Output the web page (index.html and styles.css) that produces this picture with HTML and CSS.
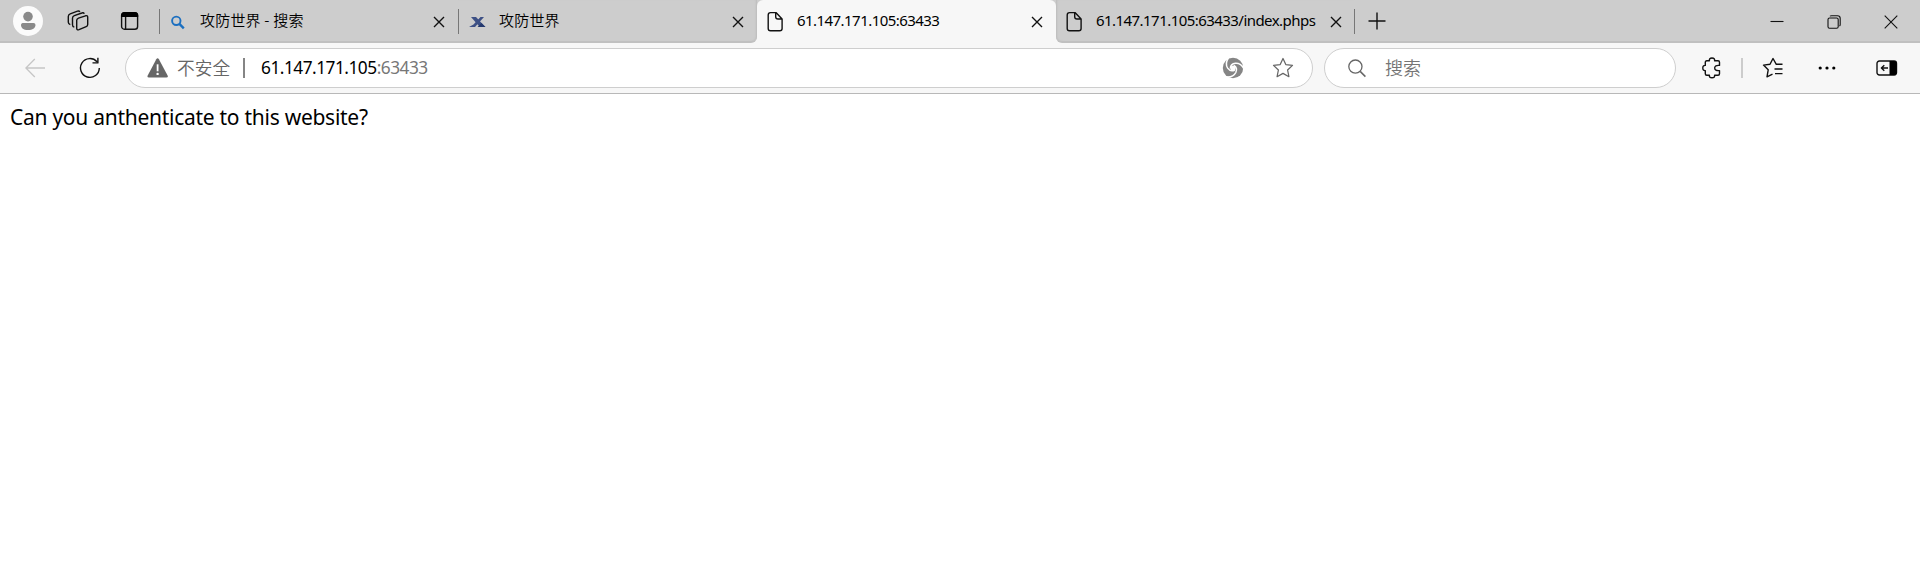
FILE: index.html
```
<!DOCTYPE html>
<html lang="zh-CN">
<head>
<meta charset="utf-8">
<title>61.147.171.105:63433</title>
<link rel="stylesheet" href="styles.css">
</head>
<body>
<header class="tabstrip">
  <div class="tools">
    <svg class="avatar" width="30" height="30" viewBox="0 0 30 30"><circle cx="15" cy="15" r="15" fill="#fbfbfb"/><circle cx="15" cy="10.600" r="4.800" fill="#8a8a8a"/><path d="M9.500 17h11a2 2 0 0 1 2 2c0 3-3 5-7.500 5S8 22 8 19a2 2 0 0 1 1.500-2z" fill="#8a8a8a"/></svg>
    <svg class="spaces" width="22" height="22" viewBox="0 0 22 22"><g class="line"><path d="M11.500 8.100 18.500 5.800Q20.700 5.200 20.700 7.300V14.400Q20.700 16 19.200 16.600L12 19.600Q9.700 20.400 9.700 18.300V10.300Q9.700 8.800 11.500 8.100"/><path d="M17.300 3.800Q16.600 2.300 14.800 3L7.300 5.700Q5.500 6.400 5.500 8.200V14.700Q5.500 16.700 7.300 17.200"/><path d="M13 1.700Q12 .7 10.500 1.200L3.200 3.800Q1.300 4.500 1.300 6.400V12.300Q1.300 14 3.300 14.700"/></g></svg>
    <svg class="layout" width="20" height="20" viewBox="0 0 20 20"><rect class="line" x="1.600" y="1.600" width="16" height="16.600" rx="2.800"/><path d="M1 6V4.500Q1 1 4.500 1h10.200q3.500 0 3.500 3.500V6z"/><path class="line" d="M5.600 6v12"/></svg>
  </div>
  <nav class="tabs">
    <div class="tab divided">
      <svg class="favicon" width="20" height="22" viewBox="0 0 20 22"><circle cx="8.300" cy="9.800" r="4.200" fill="none" stroke="#1b6fc0" stroke-width="1.900"/><path d="m11.400 12.900 4.400 4.400" stroke="#1b6fc0" stroke-width="2.400"/></svg>
      <span class="title cn">攻防世界 - 搜索</span>
      <svg class="close" width="12" height="12" viewBox="0 0 12 12"><path class="line" d="m1 1 10 10M11 1 1 11"/></svg>
    </div>
    <div class="tab divided">
      <svg class="favicon" width="20" height="22" viewBox="0 0 20 22"><path d="M4 6h5l9.300 10h-5.500z" fill="#3d5085"/><path d="M17 6h-3.500L6.500 13.500 2 16h6z" fill="#3d5085"/><path d="M14.500 12 18.500 16H10.500z" fill="#24396f"/></svg>
      <span class="title cn">攻防世界</span>
      <svg class="close" width="12" height="12" viewBox="0 0 12 12"><path class="line" d="m1 1 10 10M11 1 1 11"/></svg>
    </div>
    <div class="tab active">
      <svg class="favicon" width="20" height="22" viewBox="0 0 20 22"><path class="line" d="M10 1.600H4.500Q2.200 1.600 2.200 4v13.500q0 2.300 2.300 2.300h9.300q2.300 0 2.300-2.300V8zM9.700 1.600v4.100Q9.700 8 12 8h4"/></svg>
      <span class="title">61.147.171.105:63433</span>
      <svg class="close" width="12" height="12" viewBox="0 0 12 12"><path class="line" d="m1 1 10 10M11 1 1 11"/></svg>
    </div>
    <div class="tab after">
      <svg class="favicon" width="20" height="22" viewBox="0 0 20 22"><path class="line" d="M10 1.600H4.500Q2.200 1.600 2.200 4v13.500q0 2.300 2.300 2.300h9.300q2.300 0 2.300-2.300V8zM9.700 1.600v4.100Q9.700 8 12 8h4"/></svg>
      <span class="title">61.147.171.105:63433/index.phps</span>
      <svg class="close" width="12" height="12" viewBox="0 0 12 12"><path class="line" d="m1 1 10 10M11 1 1 11"/></svg>
    </div>
    <div class="newtab divided"><svg width="18" height="18" viewBox="0 0 18 18"><path class="line" d="M9 .5v17M.5 9h17"/></svg></div>
  </nav>
  <div class="window">
    <svg width="14" height="14" viewBox="0 0 14 14"><path d="M.5 6.500h13" class="thin"/></svg>
    <svg width="14" height="14" viewBox="0 0 14 14"><rect class="thin" x="1" y="3" width="10.200" height="10.300" rx="1.600"/><path class="thin" d="M3 1.300Q3.400.7 4.500.7h6q2.700 0 2.700 2.700v6.200q0 1-.7 1.500"/></svg>
    <svg width="14" height="14" viewBox="0 0 14 14"><path class="thin" d="m.7.700 12.600 12.600M13.300.7.700 13.300"/></svg>
  </div>
</header>

<div class="toolbar">
  <svg class="back" width="20" height="20" viewBox="0 0 20 20"><path d="M20 10H1M9.800 1 .9 10l8.900 9" fill="none" stroke="#c6c6c6" stroke-width="1.300"/></svg>
  <svg class="reload" width="22" height="22" viewBox="0 0 22 22"><path class="line" d="M20.300 11A9.400 9.400 0 1 1 18 4.800M18.900.8v5.100h-5.400"/></svg>
  <div class="pill address">
    <svg width="22" height="20" viewBox="0 0 22 20"><path d="M9.300 1.300q1.300-2 2.600 0l8.700 16.200q.9 2-1.300 2H2q-2.200 0-1.300-2z" fill="#666"/><path d="M10.600 6.300v7" stroke="#fff" stroke-width="1.800"/><circle cx="10.600" cy="15.900" r="1.200" fill="#fff"/></svg>
    <span class="insecure">不安全</span>
    <i class="bar"></i>
    <span class="url">61.147.171.105<span class="port">:63433</span></span>
    <svg class="swirl" width="22" height="22" viewBox="0 0 22 22"><circle cx="11" cy="11" r="10.200" fill="#858585"/><circle cx="11" cy="11" r="2.600" fill="#fff"/><g fill="none" stroke="#fff" stroke-width="1.500"><path id="gap" d="M22 12Q19 6 13.500 6.300 8.500 6.800 8.300 11.500"/><use href="#gap" transform="rotate(120 11 11)"/><use href="#gap" transform="rotate(240 11 11)"/></g></svg>
    <svg class="star" width="22" height="22" viewBox="0 0 22 22"><path fill="none" stroke="#666" stroke-width="1.250" stroke-linejoin="round" d="m11 1.500 2.800 6.100 6.700.8-4.900 4.600 1.300 6.700-5.900-3.300-5.900 3.300 1.300-6.700-4.900-4.600 6.700-.8z"/></svg>
  </div>
  <div class="pill search">
    <svg width="18" height="19" viewBox="0 0 18 19"><circle cx="7.400" cy="7.600" r="6.600" fill="none" stroke="#666" stroke-width="1.300"/><path d="m12.200 12.400 5.200 5.200" stroke="#666" stroke-width="1.500"/></svg>
    <span class="hint">搜索</span>
  </div>
  <div class="actions">
    <svg class="puzzle" width="20" height="22" viewBox="0 0 20 22"><path class="line" d="M4.800 3.800h2.600Q6.900 1 10 1t2.600 2.800H16q1.500 0 1.500 1.500v3.100q-4.800-.5-4.800 2.600t4.800 2.600v3.200q0 1.500-1.500 1.500h-3.400Q12.900 20.800 10 20.800T7.400 18.300H4.800q-1.500 0-1.500-1.500v-3.200Q.8 13.800.8 11t2.500-2.600V5.300Q3.300 3.800 4.800 3.800"/></svg>
    <i class="bar light"></i>
    <svg class="favorites" width="22" height="22" viewBox="0 0 22 22"><path class="line" d="M20.500 7.300h-6.200L11 1.500 8 7.300l-6.500.8 4.700 4.700L5 19.800l5.500-2.700M12.500 12h8M13 16.600h7.500"/></svg>
    <svg class="more" width="18" height="6" viewBox="0 0 18 6"><circle cx="2.200" cy="3" r="1.600"/><circle cx="9" cy="3" r="1.600"/><circle cx="15.800" cy="3" r="1.600"/></svg>
    <svg class="sidebar" width="22" height="16" viewBox="0 0 22 16"><rect class="line" x="1" y="1" width="19.500" height="14" rx="2.400"/><path d="M13.500 1H18q2.700 0 2.700 2.700v8.600Q20.700 15 18 15h-4.500z"/><path class="line" d="M12 8H5.500M8.300 5.200 5.400 8l2.900 2.800"/></svg>
  </div>
</div>
<main class="page">Can you anthenticate to this website?</main>
</body>
</html>
```
FILE: styles.css
```
* { box-sizing: border-box; }
body { margin: 0; background: #fff; color: #000; font-family: "Noto Sans", "Noto Sans CJK SC", sans-serif; }
svg { display: block; flex: none; }
.line { fill: none; stroke: #111; stroke-width: 1.4; stroke-linejoin: round; }
.thin { fill: none; stroke: #111; stroke-width: 1.1; }

.tabstrip { display: flex; height: 43px; background: #f7f7f7; }
.tools { display: flex; width: 159px; padding: 6px 0 0 13px; background: #cdcdcd; border-bottom: 2px solid #c0c0c0; }
.spaces { margin: 4px 0 0 24px; }
.layout { margin: 5px 0 0 31px; }
.tabs { display: flex; flex: 1; }
.tab { display: flex; width: 299px; padding: 10px 13px 0 9px; background: #cdcdcd; border-bottom: 2px solid #c0c0c0; }
.tab.divided, .newtab { background: linear-gradient(#777, #777) 0 9px / 1px 25px no-repeat #cdcdcd; }
.tab:nth-child(2) { border-bottom-right-radius: 6px; box-shadow: inset -2px 0 2px -1px #bbb; }
.tab.active { background: #f7f7f7; border-color: #f7f7f7; border-radius: 6px 6px 0 0; box-shadow: 0 -6px 0 6px #cdcdcd; clip-path: inset(0); }
.tab.after { border-bottom-left-radius: 6px; box-shadow: inset 2px 0 2px -1px #bbb; }
.favicon { margin-top: 1px; }
.title { flex: 1; margin-left: 11px; font-size: 15px; line-height: 20px; letter-spacing: -.55px; white-space: nowrap; }
.title.cn { margin-left: 12px; font-family: "Noto Sans CJK SC", sans-serif; font-weight: 350; letter-spacing: .2px; }
.close { margin: 6px 0 0; }
.newtab { flex: 1; margin-left: -1px; padding: 12px 0 0 14px; border-bottom: 2px solid #c0c0c0; }
.window { display: flex; gap: 43px; padding: 15px 22px 0 0; background: #cdcdcd; border-bottom: 2px solid #c0c0c0; }

.toolbar { display: flex; align-items: center; height: 51px; padding: 0 20px 0 25px; background: #f7f7f7; border-bottom: 1px solid #b8b8b8; }
.reload { margin: 0 24px 0 34px; }
.pill { display: flex; align-items: center; flex: none; height: 40px; background: #fff; border: 1px solid #cecece; border-radius: 20px; }
.address { width: 1188px; padding: 0 18px 0 21px; }
.insecure { margin: -2px 0 0 8px; width: 55px; font-size: 17.7px; line-height: 24px; color: #666; white-space: nowrap; font-weight: 350; font-family: "Noto Sans CJK SC", sans-serif; }
.bar { width: 2px; height: 20px; margin: 0 16px 0 11px; background: #858585; }
.url { flex: 1; font-size: 17.3px; line-height: 24px; letter-spacing: -.5px; white-space: nowrap; }
.port { color: #777; }
.swirl { margin-right: 28px; }
.search { width: 352px; margin-left: 11px; padding-left: 23px; }
.hint { margin: -2px 0 0 19px; font-size: 18px; line-height: 24px; color: #757575; font-weight: 350; font-family: "Noto Sans CJK SC", sans-serif; }
.actions { display: flex; align-items: center; flex: 1; }
.puzzle { margin-left: 26px; }
.bar.light { margin: 0 19px; background: #ccc; }
.more { margin-left: 34px; }
.sidebar { margin-left: 40px; }
.page { padding: 8px 10px; font-size: 21px; line-height: 30px; letter-spacing: -.27px; white-space: nowrap; }
```
